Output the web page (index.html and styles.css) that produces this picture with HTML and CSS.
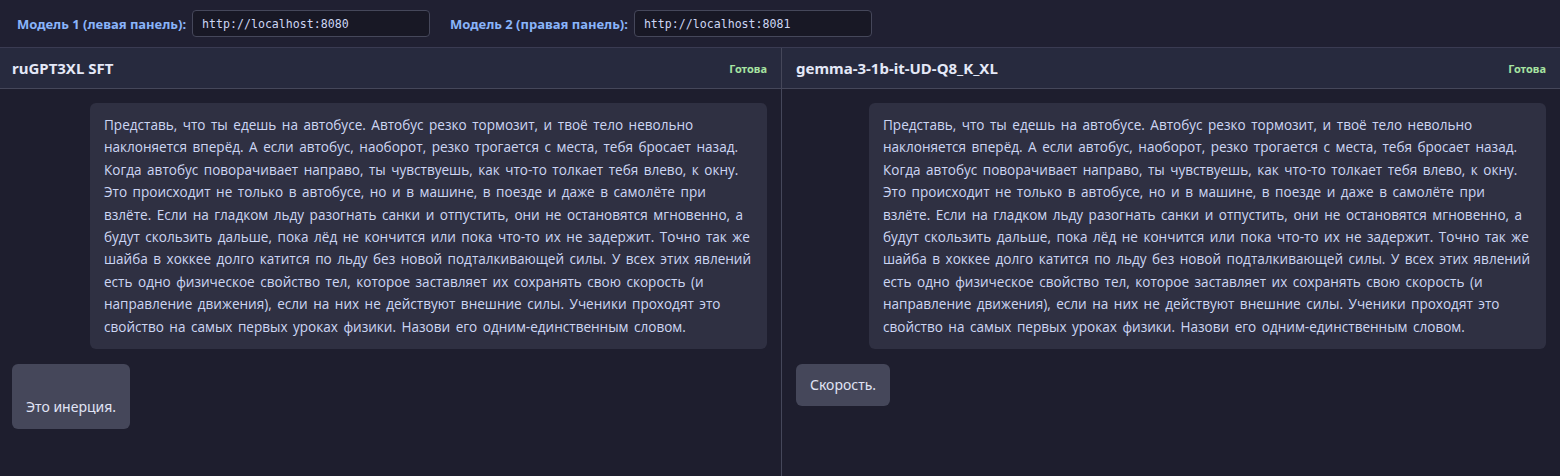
FILE: index.html
```html
<!DOCTYPE html>
<html lang="ru">
<head>
    <meta charset="UTF-8">
    <meta name="viewport" content="width=device-width, initial-scale=1.0">
    <title>Сравнение моделей</title>
    <link rel="stylesheet" href="styles.css">
</head>
<body>
    <div class="topbar">
        <div class="endpoint">
            <label for="url1">Модель 1 (левая панель):</label>
            <input type="text" id="url1" value="http://localhost:8080">
        </div>
        <div class="endpoint">
            <label for="url2">Модель 2 (правая панель):</label>
            <input type="text" id="url2" value="http://localhost:8081">
        </div>
    </div>

    <div class="panels">
        <div class="panel">
            <div class="panel-header">
                <span class="model-name">ruGPT3XL SFT</span>
                <span class="status">Готова</span>
            </div>
            <div class="messages">
                <div class="msg user">Представь, что ты едешь на автобусе. Автобус резко тормозит, и твоё тело невольно наклоняется вперёд. А если автобус, наоборот, резко трогается с места, тебя бросает назад. Когда автобус поворачивает направо, ты чувствуешь, как что-то толкает тебя влево, к окну. Это происходит не только в автобусе, но и в машине, в поезде и даже в самолёте при взлёте. Если на гладком льду разогнать санки и отпустить, они не остановятся мгновенно, а будут скользить дальше, пока лёд не кончится или пока что-то их не задержит. Точно так же шайба в хоккее долго катится по льду без новой подталкивающей силы. У всех этих явлений есть одно физическое свойство тел, которое заставляет их сохранять свою скорость (и направление движения), если на них не действуют внешние силы. Ученики проходят это свойство на самых первых уроках физики. Назови его одним-единственным словом.</div>
                <div class="msg bot">
Это инерция.</div>
            </div>
        </div>
        <div class="panel">
            <div class="panel-header">
                <span class="model-name">gemma-3-1b-it-UD-Q8_K_XL</span>
                <span class="status">Готова</span>
            </div>
            <div class="messages">
                <div class="msg user">Представь, что ты едешь на автобусе. Автобус резко тормозит, и твоё тело невольно наклоняется вперёд. А если автобус, наоборот, резко трогается с места, тебя бросает назад. Когда автобус поворачивает направо, ты чувствуешь, как что-то толкает тебя влево, к окну. Это происходит не только в автобусе, но и в машине, в поезде и даже в самолёте при взлёте. Если на гладком льду разогнать санки и отпустить, они не остановятся мгновенно, а будут скользить дальше, пока лёд не кончится или пока что-то их не задержит. Точно так же шайба в хоккее долго катится по льду без новой подталкивающей силы. У всех этих явлений есть одно физическое свойство тел, которое заставляет их сохранять свою скорость (и направление движения), если на них не действуют внешние силы. Ученики проходят это свойство на самых первых уроках физики. Назови его одним-единственным словом.</div>
                <div class="msg bot">Скорость.</div>
            </div>
        </div>
    </div>
</body>
</html>
```

FILE: styles.css
```css
* {
    box-sizing: border-box;
}
html, body {
    height: 100%;
}
body {
    margin: 0;
    background-color: #1e1e2e;
    color: #cdd6f4;
    font-family: "Noto Sans", "Open Sans", sans-serif;
    font-size: 14px;
    display: flex;
    flex-direction: column;
}
.topbar {
    display: flex;
    align-items: center;
    gap: 20px;
    padding: 10px 17px;
    background-color: #202032;
    border-bottom: 1px solid #3a3b52;
}
.endpoint {
    display: flex;
    align-items: center;
    gap: 6px;
}
.endpoint label {
    color: #89b4fa;
    font-weight: bold;
    font-size: 13px;
}
.endpoint input {
    width: 238px;
    height: 27px;
    padding: 4px 9px;
    background-color: #181825;
    border: 1px solid #45475a;
    border-radius: 4px;
    color: #cdd6f4;
    font-family: "DejaVu Sans Mono", "Liberation Mono", monospace;
    font-size: 11.6px;
}
.panels {
    flex: 1;
    display: grid;
    grid-template-columns: 781px 1fr;
}
.panel {
    display: flex;
    flex-direction: column;
    min-width: 0;
}
.panel + .panel {
    border-left: 1px solid #45475a;
}
.panel-header {
    display: flex;
    justify-content: space-between;
    align-items: center;
    height: 41px;
    padding: 0 14px 0 12px;
    background-color: #272a3e;
    border-bottom: 1px solid #45475a;
}
.panel + .panel .panel-header {
    padding-left: 14px;
}
.model-name {
    font-weight: bold;
    font-size: 15px;
    color: #e4e8f7;
}
.status {
    color: #a6e3a1;
    font-weight: bold;
    font-size: 11px;
}
.messages {
    display: flex;
    flex-direction: column;
    gap: 15px;
    padding: 14px 14px 14px 12px;
}
.panel + .panel .messages {
    padding-left: 14px;
}
.msg {
    max-width: 90%;
    padding: 11px 14px;
    border-radius: 6px;
    line-height: 22.4px;
    white-space: pre-wrap;
}
.msg.user {
    align-self: flex-end;
    max-width: 677px;
    padding-right: 12px;
    font-family: "Open Sans", "Noto Sans", sans-serif;
    font-size: 13.55px;
    word-spacing: 2px;
    background-color: #2f3042;
    color: #cdd6f4;
}
.msg.bot {
    align-self: flex-start;
    padding: 10px 14px;
    background-color: #45475a;
    color: #e0e4f5;
}
```
